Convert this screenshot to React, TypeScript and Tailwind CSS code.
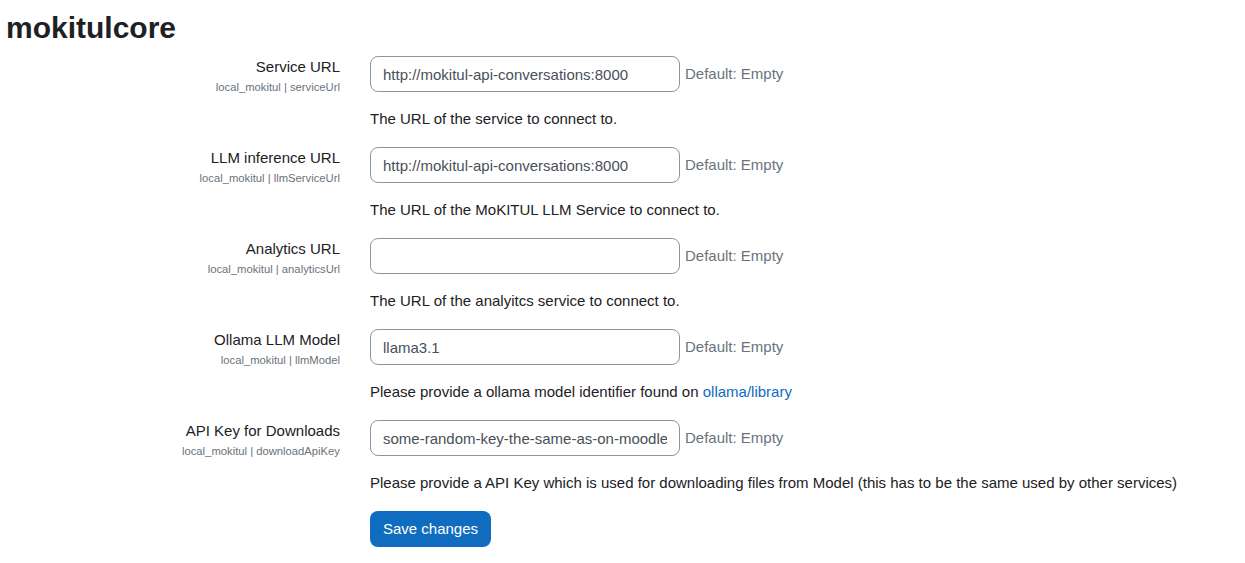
import React from "react";

type Row = {
  label: string;
  short: string;
  value: string;
  desc: React.ReactNode;
};

const rows: Row[] = [
  {
    label: "Service URL",
    short: "local_mokitul | serviceUrl",
    value: "http://mokitul-api-conversations:8000",
    desc: "The URL of the service to connect to.",
  },
  {
    label: "LLM inference URL",
    short: "local_mokitul | llmServiceUrl",
    value: "http://mokitul-api-conversations:8000",
    desc: "The URL of the MoKITUL LLM Service to connect to.",
  },
  {
    label: "Analytics URL",
    short: "local_mokitul | analyticsUrl",
    value: "",
    desc: "The URL of the analyitcs service to connect to.",
  },
  {
    label: "Ollama LLM Model",
    short: "local_mokitul | llmModel",
    value: "llama3.1",
    desc: (
      <>
        Please provide a ollama model identifier found on{" "}
        <a href="#" className="text-[#0f6cbf]">
          ollama/library
        </a>
      </>
    ),
  },
  {
    label: "API Key for Downloads",
    short: "local_mokitul | downloadApiKey",
    value: "some-random-key-the-same-as-on-moodle",
    desc: "Please provide a API Key which is used for downloading files from Model (this has to be the same used by other services)",
  },
];

export default function App() {
  return (
    <div
      className="bg-white text-[#1d2125] text-[15px] leading-[1.5] min-h-[563px]"
      style={{ fontFamily: '"Liberation Sans", Arial, sans-serif' }}
    >
      <h2 className="pt-[10px] pl-[6px] text-[30px] leading-[36px] font-bold mb-[10px]">
        mokitulcore
      </h2>
      {rows.map((r) => (
        <div key={r.label} className="flex mb-[17px]">
          <div className="w-[340px] shrink-0 text-right">
            <div className="leading-[22.5px]">{r.label}</div>
            <div className="text-[11.25px] leading-[17px] text-[#6a737b]">{r.short}</div>
          </div>
          <div className="ml-[30px]">
            <div className="flex items-center">
              <input
                readOnly
                value={r.value}
                className="w-[310px] h-[36px] border border-[#8f959e] rounded-[8px] pl-[12px] pr-[12px] text-[15px] text-[#495057] bg-white outline-none"
              />
              <span className="ml-[5px] text-[#6a737b]">Default: Empty</span>
            </div>
            <div className="mt-[16px] leading-[22px]">{r.desc}</div>
          </div>
        </div>
      ))}
      <div className="pl-[370px]">
        <button className="h-[36px] w-[121px] rounded-[8px] bg-[#0f6cbf] text-white text-[15px]">
          Save changes
        </button>
      </div>
    </div>
  );
}
